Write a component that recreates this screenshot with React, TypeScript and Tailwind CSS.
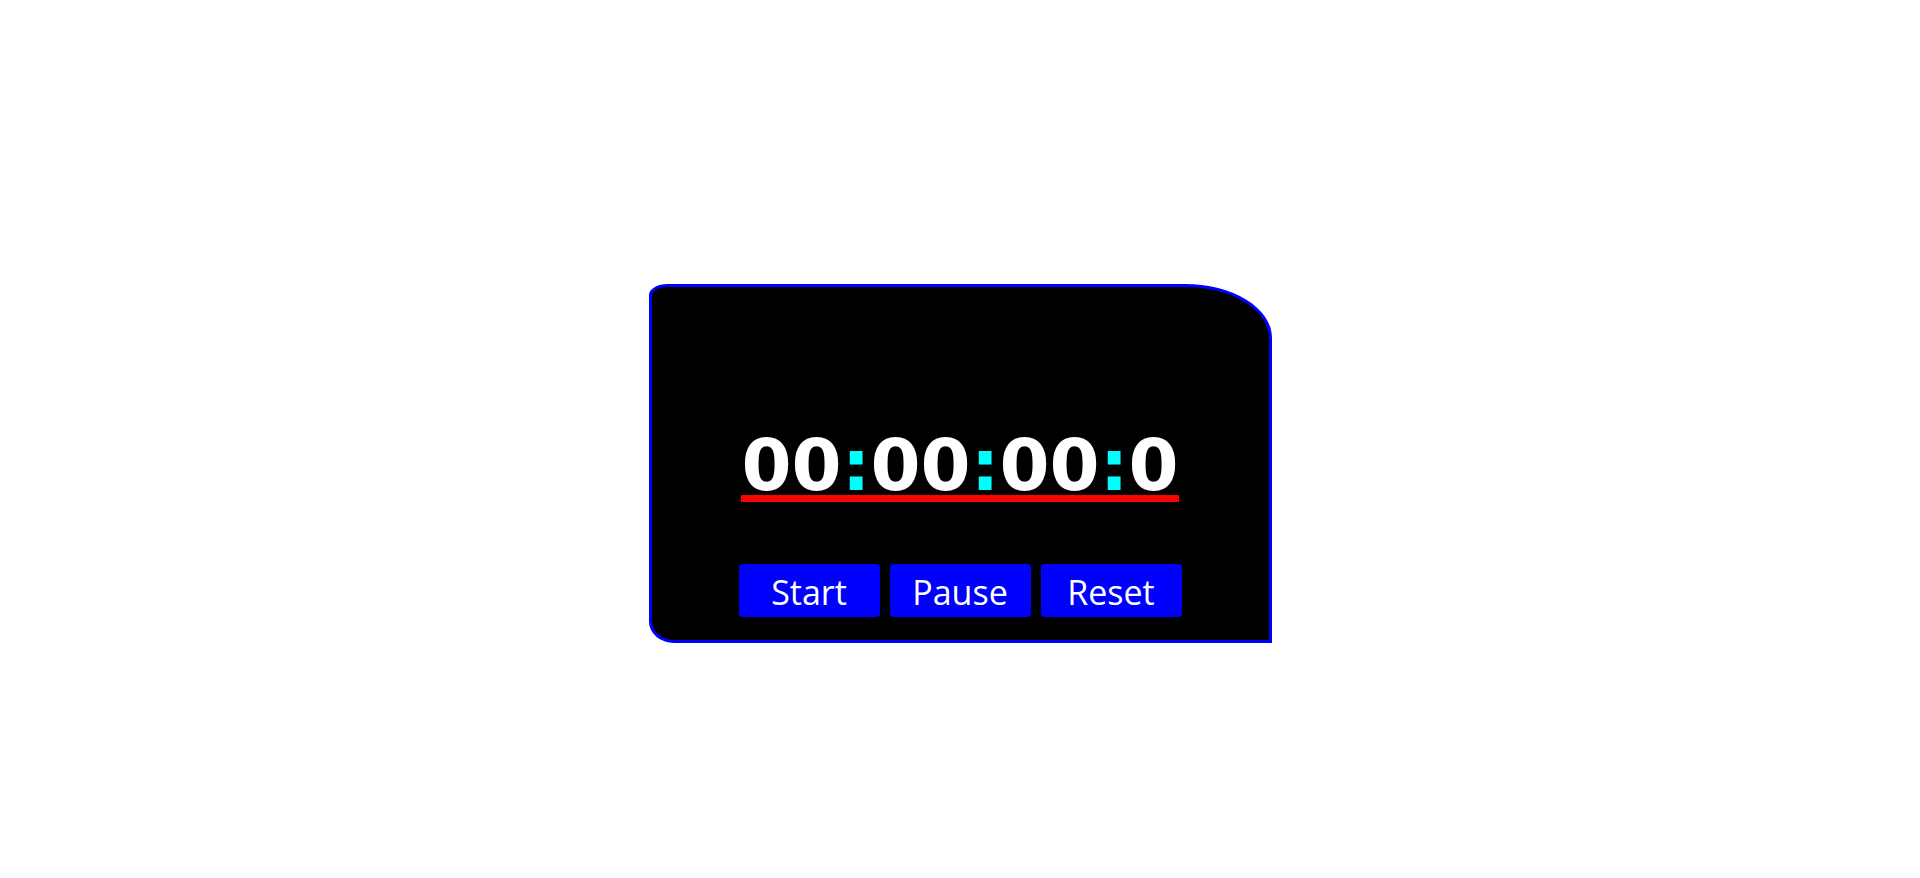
const parts = ["00", "00", "00", "0"];

function TimerButton({ label }: { label: string }) {
  return (
    <button
      type="button"
      className="flex h-[53px] w-[141px] items-center justify-center rounded-[4px] bg-[#0000ff] pt-[3px] text-[34px] text-white"
      style={{ fontFamily: '"Open Sans", "Noto Sans", sans-serif' }}
    >
      {label}
    </button>
  );
}

export default function App() {
  return (
    <div className="min-h-[878px] w-full bg-white pt-[284px]">
      <div className="mx-auto flex w-[623px] flex-col items-center rounded-[3%_14%_0_4%/3%_15%_0_6%] border-[3px] border-[#0000ff] bg-black pb-[23px] pt-[148px]">
        <div
          className="border-b-[7px] border-[#ff0000] text-[72px] font-bold leading-[60px] text-white"
          style={{ fontFamily: '"DejaVu Sans", Verdana, sans-serif' }}
        >
          {parts.map((p, i) => (
            <span key={i}>
              {p}
              {i < parts.length - 1 && <span className="text-[#00ffff]">:</span>}
            </span>
          ))}
        </div>

        <div className="mt-[62px] flex gap-[10px]">
          <TimerButton label="Start" />
          <TimerButton label="Pause" />
          <TimerButton label="Reset" />
        </div>
      </div>
    </div>
  );
}
